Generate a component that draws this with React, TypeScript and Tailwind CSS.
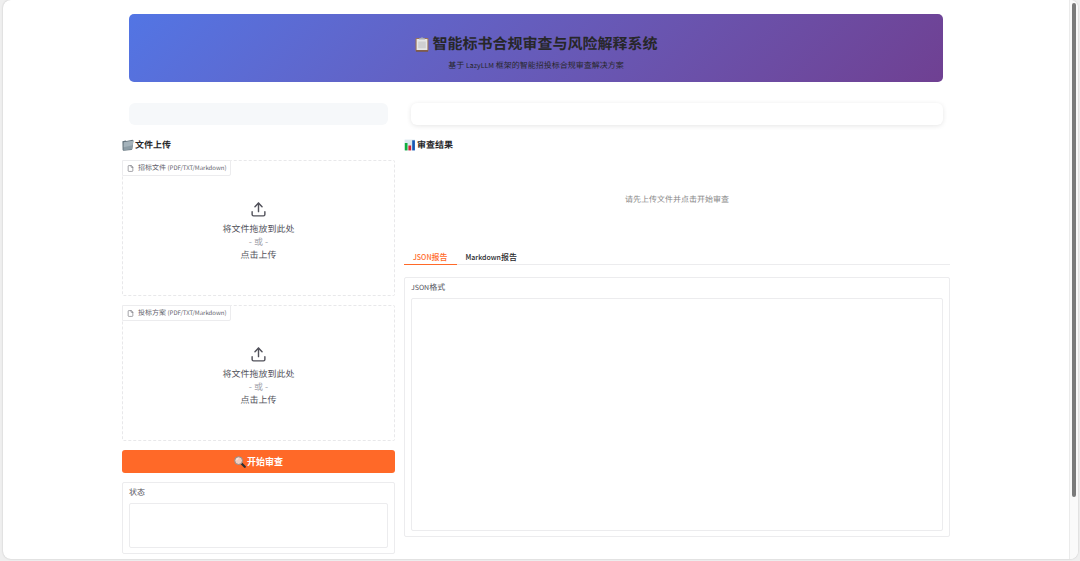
import { useState } from "react";
import { File, Upload } from "lucide-react";

const TABS = ["JSON", "Markdown"];

function ClipboardIcon() {
  return <svg viewBox="0 0 16 16" className="size-4 shrink-0" aria-hidden="true">
    <rect x="1.5" y="2" width="13" height="13.5" rx="1" fill="#9a7358" />
    <rect x="2.6" y="3" width="10.8" height="11" fill="#e6e6e6" />
    <path d="M4.2 5.5h7.6v6.8H4.2z" fill="#cfcfd1" />
    <path d="M5 3.6V2.4l2-.6C7.2 .9 8.8 .9 9 1.8l2 .6v1.2z" fill="#a9adb5" />
    <path d="M2 15h12" stroke="#6d4a38" strokeWidth="1" />
  </svg>;
}

function FolderIcon() {
  return <svg viewBox="0 0 12 12" className="size-3 shrink-0" aria-hidden="true">
    <path d="M.4 2.200 3.600 1.600l.8.5L10.600.8l.9.6-1.200 8.900-.8.6-8.200.8-.7-.6z" fill="#66757e" />
    <path d="M1.800 3.200 11.300 1.700l-1.300 8.500-8.500 1.200z" fill="#8d9da6" />
    <path d="M1.800 3.200 11.300 1.700l-.7 4.600-8.900 2z" fill="#a5b3bb" />
  </svg>;
}

function ChartIcon() {
  return <svg viewBox="0 0 12 12" className="size-3 shrink-0" aria-hidden="true">
    <path d="M.6.6h10.400v10.800H.6z" fill="#dce8f0" />
    <path d="M.8 4h2.700v7.400H.8z" fill="#0fae3c" />
    <path d="M4.400 6.500h2.700v4.900H4.400z" fill="#d3243b" />
    <path d="M8.200 1.300h2.700v10.100H8.200z" fill="#1557b5" />
  </svg>;
}

function SearchIcon() {
  return <svg viewBox="0 0 12 12" className="size-3 shrink-0" aria-hidden="true">
    <path d="m7.500 7.500 3.300 3.300" stroke="#2c2f33" strokeWidth="2.200" strokeLinecap="round" />
    <circle cx="4.600" cy="4.600" r="3.900" fill="#f3cdbf" stroke="#8b8d90" strokeWidth="1" />
    <path d="M2.600 4.200a2 2 0 0 1 1.800-1.800" fill="none" stroke="#fff" strokeWidth=".7" />
  </svg>;
}

function UploadBox({ label }: { label: string }) {
  return <label className="relative flex h-34 cursor-pointer flex-col items-center rounded-xs border border-dashed border-[#e8e8ea] pt-10 text-[9px] leading-[13px] text-[#52525b]">
    <span className="absolute -top-px -left-px flex h-4 items-center gap-1 rounded-br-xs border border-[#ececee] bg-white px-1 text-[7px] leading-3 text-[#62626b]">
      <File className="size-[7px]" strokeWidth={2} />
      <span>{label} <span className="text-[6px]">(PDF/TXT/Markdown)</span></span>
    </span>
    <input type="file" accept=".pdf,.txt,.md" className="sr-only" />
    <Upload className="mb-1 size-[17px]" strokeWidth={2} />
    <span>将文件拖放到此处</span>
    <span className="text-[#a1a1aa]">- 或 -</span>
    <span>点击上传</span>
  </label>;
}

function TextPanel({ id, format, label, tall }: { id: string; format?: string; label: string; tall?: boolean }) {
  return <div className="flex flex-col gap-1 rounded-xs border border-[#ececee] px-1.5 pt-1 pb-[5px]">
    <label htmlFor={id} className="text-[8px] leading-3 text-[#52525b]"><span className="text-[7px]">{format}</span>{label}</label>
    <textarea
      id={id}
      readOnly
      className={`w-full resize-none rounded-xs border border-[#ececee] bg-white p-1.5 text-[8px] outline-none ${tall ? "h-[233px]" : "h-[45px]"}`}
    />
  </div>;
}

export default function App() {
  const [tab, setTab] = useState("JSON");

  return <div className="flex min-h-screen bg-[#efefef] pr-0.5 pb-0.5 pl-[3px] font-['Noto_Sans_CJK_SC',sans-serif] text-[#27272a] [text-rendering:geometricPrecision]">
    <div className="flex min-w-0 flex-1 overflow-hidden rounded-lg bg-white shadow-[0_0_2px_rgba(0,0,0,0.2)]">
      <main className="min-w-0 flex-1 pt-3.5 pb-1">
        <div className="mx-auto w-full max-w-[828px]">
          <header className="mx-[7px] flex h-[68px] flex-col items-center justify-center gap-1.5 rounded-[5px] bg-linear-135 from-[#5275e4] to-[#6f4092] pt-2.5">
            <h1 className="flex items-center gap-0.5 text-[15px] leading-5 font-bold"><ClipboardIcon />智能标书合规审查与风险解释系统</h1>
            <p className="text-[8px] leading-3">基于 <span className="text-[7px]">LazyLLM</span> 框架的智能招投标合规审查解决方案</p>
          </header>

          <div className="mt-[21px] grid grid-cols-[1fr_2fr] items-start gap-[9px]">
            <section className="flex min-w-0 flex-col gap-[9px]">
              <div className="mx-[7px] h-[22px] rounded-md bg-[#f6f8fa]" />
              <h2 className="flex items-center gap-px pt-[5px] text-[9px] leading-3 font-bold"><FolderIcon />文件上传</h2>
              <UploadBox label="招标文件" />
              <UploadBox label="投标方案" />
              <button type="button" className="flex h-[23px] items-center justify-center gap-px rounded-[3px] bg-[#ff6928] text-[9px] font-bold text-white">
                <SearchIcon />开始审查
              </button>
              <TextPanel id="status" label="状态" />
            </section>

            <section className="flex min-w-0 flex-col gap-[9px]">
              <div className="mx-[7px] h-[22px] rounded-md bg-white shadow-[0_1px_5px_rgba(0,0,0,0.1)]" />
              <h2 className="flex items-center gap-px pt-[5px] text-[9px] leading-3 font-bold"><ChartIcon />审查结果</h2>
              <p className="flex h-20 items-center justify-center text-[8px] text-[#888]">请先上传文件并点击开始审查</p>
              <div>
                <div role="tablist" className="flex h-4 border-b border-[#ececee]">
                  {TABS.map((format) => <button
                    key={format}
                    type="button"
                    role="tab"
                    aria-selected={format === tab}
                    onClick={() => setTab(format)}
                    className={`-mb-px border-b px-[9px] text-[8px] leading-3 font-medium ${format === tab ? "border-[#ff6928] text-[#ff6928]" : "border-transparent"}`}
                  ><span className="text-[7px]">{format}</span>报告</button>)}
                </div>
                <div role="tabpanel" className="pt-3">
                  <TextPanel id="report" format={tab} label="格式" tall />
                </div>
              </div>
            </section>
          </div>
        </div>
      </main>
      <div className="flex w-[9px] shrink-0 flex-col border-l border-[#ebebeb] bg-[#fafafa] px-0.5 pt-[3px]" aria-hidden="true">
        <div className="grow-8 rounded-full bg-[#7b7b7b]" />
        <div className="grow" />
      </div>
    </div>
  </div>;
}
